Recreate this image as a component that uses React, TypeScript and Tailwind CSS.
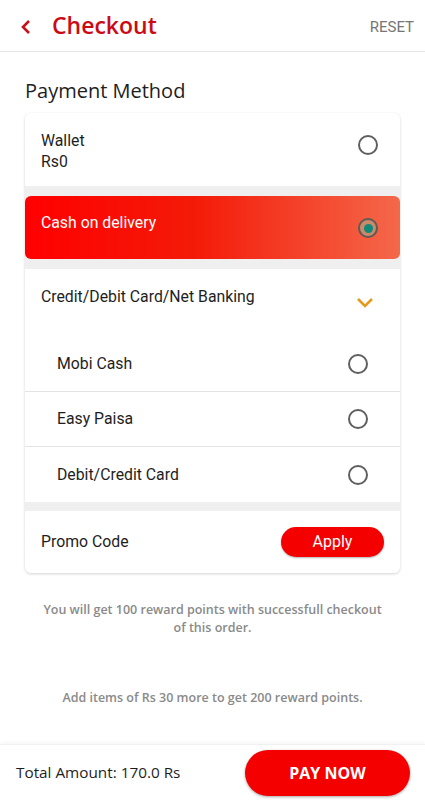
// Checkout screen — payment method selection with sticky pay bar

const Radio = ({ checked = false }: { checked?: boolean }) =>
  checked ? (
    <span className="flex h-[20px] w-[20px] items-center justify-center rounded-full border-[2px] border-[#5f5a55] bg-[#c98a6a]">
      <span className="h-[9px] w-[9px] rounded-full bg-[#0f8a7a]" />
    </span>
  ) : (
    <span className="block h-[20px] w-[20px] rounded-full border-[2px] border-[#5f5f5f]" />
  )

const subOptions = ['Mobi Cash', 'Easy Paisa', 'Debit/Credit Card']

export default function App() {
  return (
    <div className="flex h-[800px] w-[425px] flex-col bg-white font-['Roboto',sans-serif]">
      {/* Header */}
      <div className="flex h-[52px] items-center justify-between border-b border-[#e6e6e6] pl-[20px] pr-[11px]">
        <div className="flex items-center">
          <svg width="12" height="16" viewBox="0 0 12 16" className="mr-[20px] mt-[2px]">
            <path d="M9 2 L3 8 L9 14" fill="none" stroke="#c8101a" strokeWidth="2.6" />
          </svg>
          <span className="font-['Open_Sans',sans-serif] text-[23px] font-semibold leading-none text-[#cc0a14]">Checkout</span>
        </div>
        <span className="mt-[4px] text-[15px] text-[#757575]">RESET</span>
      </div>

      {/* Body */}
      <div className="flex-1 px-[25px]">
        <h2 className="mt-[27px] font-['Open_Sans',sans-serif] text-[20px] font-medium leading-[24px] text-[#1e1e1e]">Payment Method</h2>

        <div className="mt-[10px] overflow-hidden rounded-[6px] bg-[#efefef] shadow-[0_1px_3px_rgba(0,0,0,0.18)]">
          {/* Wallet */}
          <div className="flex h-[73px] items-start justify-between bg-white pl-[16px] pr-[22px] pt-[17px]">
            <div className="text-[15.8px] leading-[21px] text-[#1e1e1e]">
              <div>Wallet</div>
              <div>Rs0</div>
            </div>
            <div className="mt-[5px]"><Radio /></div>
          </div>

          {/* Cash on delivery */}
          <div className="mt-[10px] flex h-[63px] items-start justify-between rounded-[6px] bg-[linear-gradient(90deg,#ff0000_0%,#f41a08_45%,#f4684a_100%)] pl-[16px] pr-[22px] pt-[16px]">
            <span className="text-[15.8px] leading-[21px] text-white">Cash on delivery</span>
            <div className="mt-[6px]"><Radio checked /></div>
          </div>

          {/* Card / net banking */}
          <div className="mt-[10px] bg-white">
            <div className="flex h-[68px] items-start justify-between pl-[16px] pr-[26px] pt-[17px]">
              <span className="text-[15.8px] leading-[21px] text-[#1e1e1e]">Credit/Debit Card/Net Banking</span>
              <svg width="18" height="12" viewBox="0 0 18 12" className="mt-[11px]">
                <path d="M2 2 L9 9 L16 2" fill="none" stroke="#e69a1c" strokeWidth="2.6" />
              </svg>
            </div>
            {subOptions.map((label, i) => (
              <div
                key={label}
                className={`flex h-[55px] items-center justify-between pl-[32px] pr-[32px] ${i < subOptions.length - 1 ? 'border-b border-[#e3e3e3]' : ''}`}
              >
                <span className="text-[15.8px] text-[#1e1e1e]">{label}</span>
                <Radio />
              </div>
            ))}
          </div>

          {/* Promo */}
          <div className="mt-[9px] flex h-[62px] items-center justify-between bg-white pl-[16px] pr-[16px]">
            <span className="text-[15.8px] text-[#1e1e1e]">Promo Code</span>
            <button className="h-[30px] w-[103px] rounded-full bg-[#f40000] text-[16px] text-white shadow-[0_1px_2px_rgba(0,0,0,0.3)]">Apply</button>
          </div>
        </div>

        <p className="mt-[28px] px-[12px] text-center font-['Open_Sans',sans-serif] text-[12.5px] font-semibold leading-[18px] text-[#8a8a8a]">
          You will get 100 reward points with successfull checkout of this order.
        </p>
        <p className="mt-[52px] text-center font-['Open_Sans',sans-serif] text-[12.5px] font-semibold leading-[18px] text-[#8a8a8a]">
          Add items of Rs 30 more to get 200 reward points.
        </p>
      </div>

      {/* Bottom bar */}
      <div className="flex h-[56px] items-center justify-between border-t border-[#f1f1f1] pl-[16px] pr-[15px] shadow-[0_-2px_4px_rgba(0,0,0,0.03)]">
        <span className="font-['Open_Sans',sans-serif] text-[15.3px] text-[#1e1e1e]">Total Amount: 170.0 Rs</span>
        <button className="h-[46px] w-[165px] rounded-full bg-[#f40000] font-['Open_Sans',sans-serif] text-[16px] font-bold text-white shadow-[0_1px_3px_rgba(0,0,0,0.35)]">PAY NOW</button>
      </div>
    </div>
  )
}
